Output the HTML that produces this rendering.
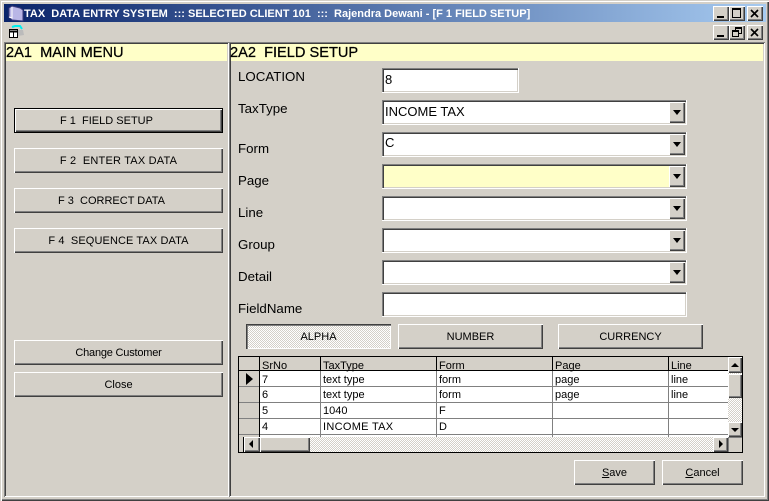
<!DOCTYPE html>
<html><head><meta charset="utf-8"><style>
html,body{margin:0;padding:0}
body{width:769px;height:501px;overflow:hidden;position:relative;background:#d4d0c8;font-family:"Liberation Sans",sans-serif;font-size:12px;color:#000}
div{position:absolute;box-sizing:border-box;white-space:pre}
.t{line-height:14px}
.lb{font-size:13.3px;line-height:16px;left:238px}
.btn{background:#d4d0c8;box-shadow:inset 1px 1px 0 #fff,inset -1px -1px 0 #404040,inset -2px -2px 0 #808080;text-align:center;font-size:11px;line-height:26px}
.f1{box-shadow:0 0 0 1px #000,inset 1px 1px 0 #fff,inset -1px -1px 0 #404040,inset -2px -2px 0 #808080}
.in{background:#fff;left:382px;box-shadow:inset 1px 1px 0 #808080,inset 2px 2px 0 #404040,inset -1px -1px 0 #d4d0c8;border-right:1px solid #fff;border-bottom:1px solid #fff;font-size:13px;line-height:20px;padding-left:3px;height:25px}
.c{width:305px}
.ar{left:287px;top:2px;width:16px;height:21px;background:#d4d0c8;box-shadow:inset 1px 1px 0 #fff,inset -1px -1px 0 #404040,inset -2px -2px 0 #808080}
.ar:after{content:"";position:absolute;left:4px;top:8px;border-left:4px solid transparent;border-right:4px solid transparent;border-top:5px solid #000}
.sb{background:#d4d0c8;box-shadow:inset 1px 1px 0 #fff,inset -1px -1px 0 #404040,inset -2px -2px 0 #808080;width:14px;height:16px}
.ctl{background:#d4d0c8;width:16px;height:15px;box-shadow:inset 1px 1px 0 #fff,inset -1px -1px 0 #404040,inset -2px -2px 0 #808080}
.g{font-size:11px;line-height:14px;overflow:hidden}
.hl{background:#808080;height:1px;left:239px;width:489px}
.vl{background:#808080;width:1px;top:371px;height:66px}
.vh{background:#000;width:1px;top:357px;height:14px}
.dith{background:repeating-conic-gradient(#fff 0 25%,#d4d0c8 0 50%) 0 0/2px 2px}
.hd{top:44px;height:17px;background:#ffffc8;font-size:14.6px;line-height:18px;-webkit-text-stroke:.25px #000}
</style></head><body>
<div style="left:0;top:0;width:769px;height:501px;box-shadow:inset 1px 1px 0 #d4d0c8,inset 2px 2px 0 #fff,inset -1px -1px 0 #404040,inset -2px -2px 0 #808080"></div>
<div style="left:4px;top:4px;width:762px;height:18px;background:linear-gradient(90deg,#0a246a,#a6caf0)"></div>
<svg style="position:absolute;left:8px;top:5px" width="16" height="17"><path d="M1 3l3-2 8 2 3 2v11l-11-1-3-3z" fill="#b9b6e6" stroke="#3a3a7a"/><path d="M4 2v11l-3-1" stroke="#fff" fill="none"/></svg>
<div class="t" style="left:24px;top:7px;color:#fff;font-weight:bold;font-size:11px">TAX  DATA ENTRY SYSTEM  ::: SELECTED CLIENT 101  :::  Rajendra Dewani - [F 1 FIELD SETUP]</div>
<div class="ctl" style="left:713px;top:6px"><div style="left:4px;top:10px;width:7px;height:2px;background:#000"></div></div>
<div class="ctl" style="left:729px;top:6px"><div style="left:3px;top:2px;width:9px;height:10px;border:1px solid #000;border-top-width:2px"></div></div>
<div class="ctl" style="left:747px;top:6px"><svg style="position:absolute;left:3px;top:3px" width="10" height="9"><path d="M1 1l7 7M8 1l-7 7" stroke="#000" stroke-width="1.6"/></svg></div>
<svg style="position:absolute;left:8px;top:24px" width="17" height="15"><path d="M4 3l3-1h5l2 3" stroke="#0ee" stroke-width="2" fill="none"/><path d="M10 6h5l1 5-6 1z" fill="#bbb"/><rect x="1.500" y="5.500" width="8" height="8" fill="#fff" stroke="#000"/><path d="M1 7.500h9" stroke="#000" stroke-width="2"/><path d="M5.500 8v5" stroke="#000"/></svg>
<div class="ctl" style="left:713px;top:25px"><div style="left:4px;top:10px;width:7px;height:2px;background:#000"></div></div>
<div class="ctl" style="left:729px;top:25px"><div style="left:6px;top:2px;width:7px;height:7px;border:1px solid #000;border-top-width:2px"></div><div style="left:3px;top:5px;width:7px;height:7px;border:1px solid #000;border-top-width:2px;background:#d4d0c8"></div></div>
<div class="ctl" style="left:747px;top:25px"><svg style="position:absolute;left:3px;top:3px" width="10" height="9"><path d="M1 1l7 7M8 1l-7 7" stroke="#000" stroke-width="1.6"/></svg></div>

<div style="left:4px;top:42px;width:225px;height:455px;box-shadow:inset 1px 1px 0 #808080,inset -1px -1px 0 #fff,inset 2px 2px 0 #404040"></div>
<div style="left:229px;top:42px;width:536px;height:455px;box-shadow:inset 1px 1px 0 #808080,inset -1px -1px 0 #fff,inset 2px 2px 0 #404040"></div>
<div class="hd" style="left:6px;width:221px">2A1  MAIN MENU</div>
<div class="hd" style="left:231px;width:532px;padding-left:0"><span style="margin-left:-1px">2A2  FIELD SETUP</span></div>

<div class="btn f1" style="left:15px;top:109px;width:207px;height:23px;line-height:24px;padding-right:24px">F 1  FIELD SETUP</div>
<div class="btn" style="left:14px;top:148px;width:209px;height:25px;letter-spacing:.2px">F 2  ENTER TAX DATA</div>
<div class="btn" style="left:14px;top:188px;width:209px;height:25px;padding-right:14px">F 3  CORRECT DATA</div>
<div class="btn" style="left:14px;top:228px;width:209px;height:25px;letter-spacing:.1px">F 4  SEQUENCE TAX DATA</div>
<div class="btn" style="left:14px;top:340px;width:209px;height:25px;letter-spacing:-.2px">Change Customer</div>
<div class="btn" style="left:14px;top:372px;width:209px;height:25px">Close</div>

<div class="lb" style="top:69px">LOCATION</div>
<div class="lb" style="top:101px">TaxType</div>
<div class="lb" style="top:141px">Form</div>
<div class="lb" style="top:173px">Page</div>
<div class="lb" style="top:205px">Line</div>
<div class="lb" style="top:237px">Group</div>
<div class="lb" style="top:269px">Detail</div>
<div class="lb" style="top:301px">FieldName</div>

<div class="in" style="top:68px;width:137px;line-height:24px">8</div>
<div class="in c" style="top:100px;line-height:23px">INCOME TAX<div class="ar"></div></div>
<div class="in c" style="top:132px;line-height:22px">C<div class="ar"></div></div>
<div class="in c" style="top:164px;background:#ffffc8"><div class="ar"></div></div>
<div class="in c" style="top:196px"><div class="ar"></div></div>
<div class="in c" style="top:228px"><div class="ar"></div></div>
<div class="in c" style="top:260px"><div class="ar"></div></div>
<div class="in c" style="top:292px"></div>

<div class="btn dith" style="left:246px;top:324px;width:145px;height:25px;box-shadow:inset 1px 1px 0 #404040,inset 2px 2px 0 #808080,inset -1px -1px 0 #fff;line-height:27px">ALPHA</div>
<div class="btn" style="left:398px;top:324px;width:145px;height:25px">NUMBER</div>
<div class="btn" style="left:558px;top:324px;width:145px;height:25px">CURRENCY</div>

<div style="left:238px;top:356px;width:505px;height:97px;border:1px solid #000;background:#fff"></div>
<div style="left:239px;top:357px;width:489px;height:13px;background:#d4d0c8"></div>
<div style="left:239px;top:370px;width:489px;height:1px;background:#000"></div>
<div style="left:239px;top:371px;width:20px;height:66px;background:#d4d0c8"></div>
<div class="hl" style="top:386px"></div><div class="hl" style="top:402px"></div><div class="hl" style="top:418px"></div><div class="hl" style="top:434px"></div>
<div class="vh" style="left:259px"></div><div class="vh" style="left:320px"></div><div class="vh" style="left:436px"></div><div class="vh" style="left:552px"></div><div class="vh" style="left:668px"></div>
<div class="vl" style="left:259px;background:#000"></div><div class="vl" style="left:320px"></div><div class="vl" style="left:436px"></div><div class="vl" style="left:552px"></div><div class="vl" style="left:668px"></div>
<div style="left:246px;top:373px;width:0;height:0;border-left:7px solid #000;border-top:6px solid transparent;border-bottom:6px solid transparent"></div>

<div class="g" style="left:262px;top:359px">SrNo</div><div class="g" style="left:323px;top:359px">TaxType</div><div class="g" style="left:439px;top:359px">Form</div><div class="g" style="left:555px;top:359px">Page</div><div class="g" style="left:671px;top:359px">Line</div>
<div class="g" style="left:262px;top:373px">7</div><div class="g" style="left:323px;top:373px">text type</div><div class="g" style="left:439px;top:373px">form</div><div class="g" style="left:555px;top:373px">page</div><div class="g" style="left:671px;top:373px">line</div>
<div class="g" style="left:262px;top:388px">6</div><div class="g" style="left:323px;top:388px">text type</div><div class="g" style="left:439px;top:388px">form</div><div class="g" style="left:555px;top:388px">page</div><div class="g" style="left:671px;top:388px">line</div>
<div class="g" style="left:262px;top:404px">5</div><div class="g" style="left:323px;top:404px">1040</div><div class="g" style="left:439px;top:404px">F</div>
<div class="g" style="left:262px;top:420px">4</div><div class="g" style="left:323px;top:420px;letter-spacing:.3px">INCOME TAX</div><div class="g" style="left:439px;top:420px">D</div>

<div class="dith" style="left:728px;top:357px;width:14px;height:80px"></div>
<div class="sb" style="left:728px;top:357px"><div style="left:3px;top:6px;border-left:4px solid transparent;border-right:4px solid transparent;border-bottom:4px solid #000"></div></div>
<div class="sb" style="left:728px;top:374px;height:24px"></div>
<div class="sb" style="left:728px;top:422px;height:15px"><div style="left:3px;top:6px;border-left:4px solid transparent;border-right:4px solid transparent;border-top:4px solid #000"></div></div>
<div style="left:239px;top:437px;width:5px;height:15px;background:#d4d0c8"></div>
<div style="left:243px;top:437px;width:1px;height:15px;background:#000"></div>
<div class="dith" style="left:310px;top:437px;width:403px;height:15px"></div>
<div style="left:728px;top:437px;width:14px;height:15px;background:#d4d0c8;border-left:1px solid #808080;border-top:1px solid #808080"></div>
<div class="sb" style="left:244px;top:437px;width:16px;height:15px"><div style="left:5px;top:3px;border-top:4px solid transparent;border-bottom:4px solid transparent;border-right:4px solid #000"></div></div>
<div class="sb" style="left:260px;top:437px;width:50px;height:15px"></div>
<div class="sb" style="left:713px;top:437px;width:15px;height:15px"><div style="left:6px;top:3px;border-top:4px solid transparent;border-bottom:4px solid transparent;border-left:4px solid #000"></div></div>

<div class="btn" style="left:574px;top:460px;width:81px;height:25px"><u>S</u>ave</div>
<div class="btn" style="left:662px;top:460px;width:81px;height:25px"><u>C</u>ancel</div>
</body></html>
